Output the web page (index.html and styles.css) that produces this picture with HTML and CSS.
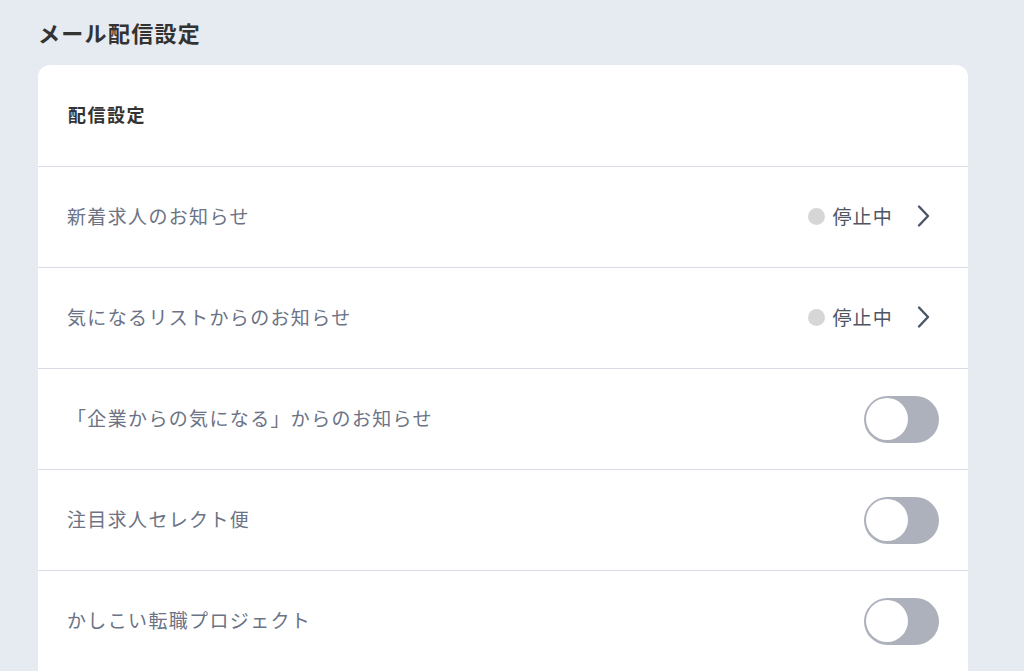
FILE: index.html
```html
<!DOCTYPE html>
<html lang="ja">
<head>
<meta charset="utf-8">
<link rel="stylesheet" href="styles.css">
</head>
<body>
<main class="page">
  <h1 class="page-title">メール配信設定</h1>
  <section class="card">
    <div class="card-head">配信設定</div>
    <div class="row">
      <span class="label">新着求人のお知らせ</span>
      <span class="status"><span class="dot"></span><span class="status-text">停止中</span>
        <svg class="chev" width="15" height="24" viewBox="0 0 15 24"><path d="M3 2.5 L12 12 L3 21.5" fill="none" stroke="#4a5568" stroke-width="2.4" stroke-linecap="round" stroke-linejoin="round"/></svg>
      </span>
    </div>
    <div class="row">
      <span class="label">気になるリストからのお知らせ</span>
      <span class="status"><span class="dot"></span><span class="status-text">停止中</span>
        <svg class="chev" width="15" height="24" viewBox="0 0 15 24"><path d="M3 2.5 L12 12 L3 21.5" fill="none" stroke="#4a5568" stroke-width="2.4" stroke-linecap="round" stroke-linejoin="round"/></svg>
      </span>
    </div>
    <div class="row">
      <span class="label">「企業からの気になる」からのお知らせ</span>
      <span class="toggle"><span class="knob"></span></span>
    </div>
    <div class="row">
      <span class="label">注目求人セレクト便</span>
      <span class="toggle"><span class="knob"></span></span>
    </div>
    <div class="row">
      <span class="label">かしこい転職プロジェクト</span>
      <span class="toggle"><span class="knob"></span></span>
    </div>
  </section>
</main>
</body>
</html>
```
FILE: styles.css
```css
html, body {
  margin: 0;
  padding: 0;
  background: #e6eaf1;
  font-family: "Noto Sans CJK JP", "Noto Sans", sans-serif;
  overflow: hidden;
}
.page {
  padding: 16px 56px 0 38px;
  width: 930px;
}
.page-title {
  margin: 0 0 17px 0;
  font-size: 22px;
  line-height: 32px;
  font-weight: 700;
  color: #333333;
  letter-spacing: 1.3px;
}
.card {
  background: #ffffff;
  border-radius: 12px 12px 0 0;
}
.card-head {
  height: 98px;
  display: flex;
  align-items: center;
  padding: 0 30px 3px;
  box-sizing: content-box;
  font-size: 18px;
  font-weight: 700;
  color: #333333;
  letter-spacing: 1.5px;
  border-bottom: 1px solid #d9dce6;
}
.row {
  height: 100px;
  display: flex;
  align-items: center;
  justify-content: space-between;
  padding: 0 29px;
  border-bottom: 1px solid #d9dce6;
}
.label {
  font-size: 19px;
  letter-spacing: 1.35px;
  color: #6b7385;
  margin-bottom: 4px;
}
.status {
  display: flex;
  align-items: center;
}
.dot {
  width: 17px;
  height: 17px;
  border-radius: 50%;
  background: #d6d6d6;
  margin-right: 7px;
  margin-bottom: 1px;
}
.status-text {
  font-size: 19px;
  letter-spacing: 1.2px;
  color: #4f5563;
  margin-bottom: 4px;
}
.chev {
  margin-left: 23px;
  margin-right: 8px;
  margin-bottom: 2px;
}
.toggle {
  width: 75px;
  height: 47px;
  border-radius: 24px;
  background: #adb1bb;
  display: flex;
  align-items: center;
  padding-left: 2px;
  box-sizing: border-box;
}
.knob {
  width: 42px;
  height: 42px;
  border-radius: 50%;
  background: #ffffff;
}
```
